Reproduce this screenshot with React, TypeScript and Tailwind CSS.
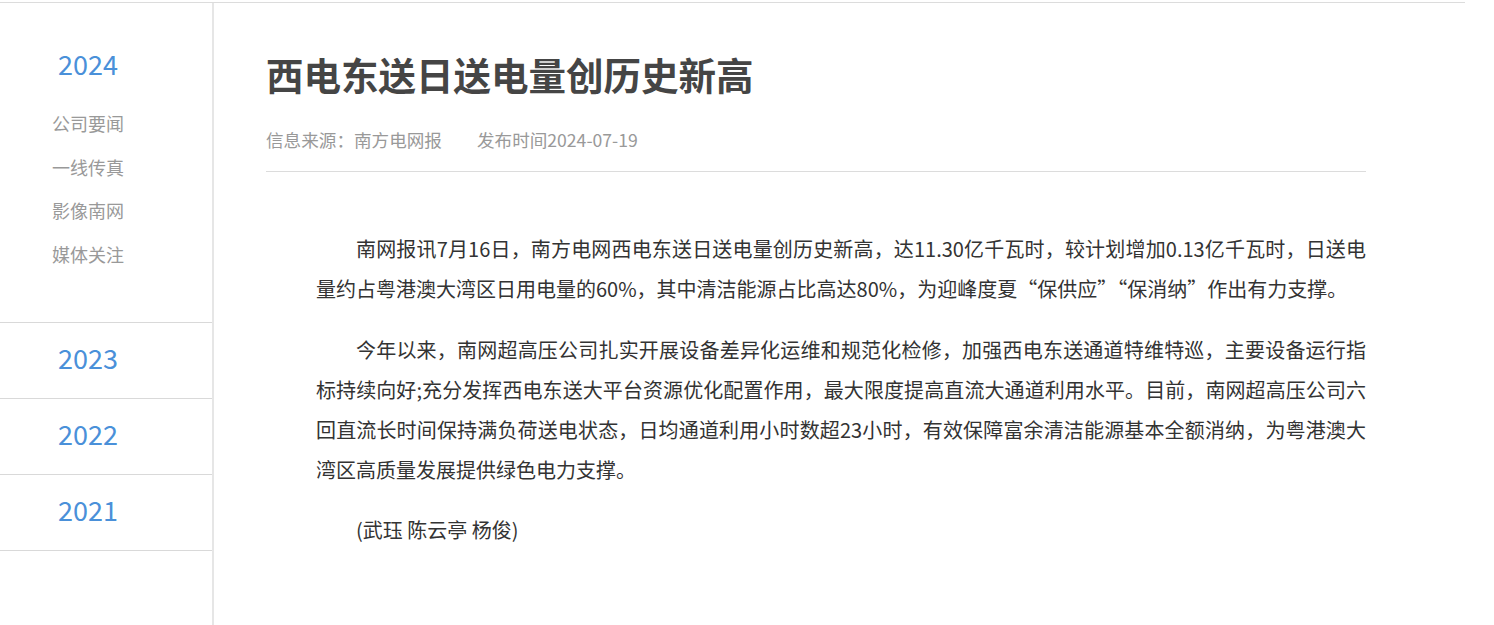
import React from "react";

const FONT = { fontFamily: '"Noto Sans CJK SC", "Noto Sans", sans-serif' };

const items = ["公司要闻", "一线传真", "影像南网", "媒体关注"];
const years = ["2023", "2022", "2021"];

export default function App() {
  return (
    <div className="w-[1494px] h-[625px] overflow-hidden bg-white" style={FONT}>
      <div className="mt-[2px] w-[1465px] border-t border-[#dcdcdc] flex min-h-[623px]">
        <aside className="w-[214px] shrink-0 border-r-2 border-[#e6e6e6]">
          <div className="pt-[23px] pb-[46px] pr-[36px] border-b border-[#d9d9d9]">
            <div className="h-[76px] flex items-center justify-center text-[27px] text-[#4a90d9]">2024</div>
            <ul>
              {items.map((t) => (
                <li key={t} className="h-[43.5px] flex items-center justify-center text-[18px] text-[#999999]">
                  {t}
                </li>
              ))}
            </ul>
          </div>
          {years.map((y) => (
            <div
              key={y}
              className="h-[76px] pr-[36px] pb-[4px] border-b border-[#d9d9d9] flex items-center justify-center text-[27px] text-[#4a90d9]"
            >
              {y}
            </div>
          ))}
        </aside>
        <main className="pl-[52px] pt-[47px]">
          <div className="w-[1100px]">
            <h1 className="text-[37.5px] leading-[48px] font-bold text-[#454545]">西电东送日送电量创历史新高</h1>
            <div className="mt-[30px] pb-[19px] border-b border-[#dcdcdc] text-[17.6px] leading-[24px] text-[#999999]">
              <span>信息来源：南方电网报</span>
              <span className="ml-[35px]">发布时间2024-07-19</span>
            </div>
            <div className="mt-[57px] pl-[50px] text-[20px] leading-[40px] text-[#333333]">
              <p className="indent-[40px] text-justify mb-[21px]">
                南网报讯7月16日，南方电网西电东送日送电量创历史新高，达11.30亿千瓦时，较计划增加0.13亿千瓦时，日送电量约占粤港澳大湾区日用电量的60%，其中清洁能源占比高达80%，为迎峰度夏“保供应”“保消纳”作出有力支撑。
              </p>
              <p className="indent-[40px] text-justify mb-[20px]">
                今年以来，南网超高压公司扎实开展设备差异化运维和规范化检修，加强西电东送通道特维特巡，主要设备运行指标持续向好;充分发挥西电东送大平台资源优化配置作用，最大限度提高直流大通道利用水平。目前，南网超高压公司六回直流长时间保持满负荷送电状态，日均通道利用小时数超23小时，有效保障富余清洁能源基本全额消纳，为粤港澳大湾区高质量发展提供绿色电力支撑。
              </p>
              <p className="indent-[40px]">(武珏 陈云亭 杨俊)</p>
            </div>
          </div>
        </main>
      </div>
    </div>
  );
}
